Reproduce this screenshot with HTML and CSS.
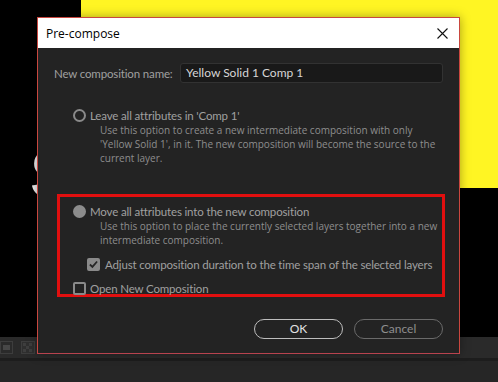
FILE: index.html
```html
<!DOCTYPE html>
<html>
<head>
<meta charset="utf-8">
<link rel="stylesheet" href="styles.css">
</head>
<body>
<div class="app">
  <div class="viewer">
    <div class="solid"></div>
    <span class="glyph">S</span>
  </div>
  <div class="toolbar">
    <svg class="tool" width="13" height="13" viewBox="0 0 13 13"><rect x="0.5" y="0.5" width="12" height="12" fill="none" stroke="#3d3d3d"/><rect x="3" y="4" width="7" height="5" fill="#474747"/></svg>
    <svg class="tool" width="14" height="13" viewBox="0 0 14 13"><rect x="0.5" y="0.5" width="13" height="12" fill="#2f2f2f" stroke="#3d3d3d"/><rect x="2" y="2" width="3" height="3" fill="#3e3e3e"/><rect x="8" y="2" width="3" height="3" fill="#3e3e3e"/><rect x="5" y="5" width="3" height="3" fill="#3e3e3e"/><rect x="2" y="8" width="3" height="3" fill="#3e3e3e"/><rect x="8" y="8" width="3" height="3" fill="#3e3e3e"/></svg>
  </div>
  <div class="divider"></div>
  <div class="panel"></div>
</div>

<div class="dialog">
  <div class="titlebar">
    <span class="title">Pre-compose</span>
    <svg class="close" width="11" height="11" viewBox="0 0 11 11"><path d="M0.5 0.5 L10.5 10.5 M10.5 0.5 L0.5 10.5" stroke="#111" stroke-width="1.1" fill="none"/></svg>
  </div>
  <div class="content">
    <div class="name-row">
      <span class="label">New composition name:</span>
      <div class="input">Yellow Solid 1 Comp 1</div>
    </div>

    <div class="option first">
      <div class="row">
        <span class="radio"></span>
        <span class="label">Leave all attributes in 'Comp 1'</span>
      </div>
      <div class="desc">Use this option to create a new intermediate composition with only<br>'Yellow Solid 1', in it. The new composition will become the source to the<br>current layer.</div>
    </div>

    <div class="highlight">
      <div class="row">
        <span class="radio on"></span>
        <span class="label">Move all attributes into the new composition</span>
      </div>
      <div class="desc">Use this option to place the currently selected layers together into a new<br>intermediate composition.</div>
      <div class="row check-row">
        <span class="check on"><svg width="10" height="9" viewBox="0 0 10 9"><path d="M1 4.5 L3.8 7.2 L9 1.2" stroke="#262626" stroke-width="2" fill="none"/></svg></span>
        <span class="label">Adjust composition duration to the time span of the selected layers</span>
      </div>
      <div class="row open-row">
        <span class="check"></span>
        <span class="label">Open New Composition</span>
      </div>
    </div>

    <div class="buttons">
      <div class="btn ok">OK</div>
      <div class="btn cancel">Cancel</div>
    </div>
  </div>
</div>
</body>
</html>
```

FILE: styles.css
```css
html, body {
  margin: 0;
  padding: 0;
}
body {
  width: 498px;
  height: 382px;
  overflow: hidden;
  background: #000;
  font-family: "Lato", "Open Sans", sans-serif;
  position: relative;
}
.app {
  display: flex;
  flex-direction: column;
  height: 382px;
}
.viewer {
  position: relative;
  height: 337px;
  background: #000;
  overflow: hidden;
}
.solid {
  position: absolute;
  left: 81px;
  top: 0;
  right: 0;
  height: 188px;
  background: #fff523;
}
.glyph {
  position: absolute;
  left: 30px;
  top: 140px;
  font-family: "Liberation Sans", sans-serif;
  font-weight: bold;
  font-size: 68px;
  line-height: 1;
  color: #f2f2f2;
}
.toolbar {
  height: 21px;
  background: #2a2a2a;
  display: flex;
  align-items: center;
  gap: 8px;
}
.tool { display: block; }
.divider {
  height: 3px;
  background: #1d1d1d;
}
.panel {
  flex: 1;
  background: #262626;
}

.dialog {
  position: absolute;
  left: 37px;
  top: 17px;
  width: 421px;
  height: 335px;
  border: 1px solid #c9473f;
  border-bottom-color: #b8434f;
  background: #232323;
  box-shadow: 0 0 10px rgba(0,0,0,0.35);
  display: flex;
  flex-direction: column;
}
.titlebar {
  height: 30px;
  background: #fff;
  display: flex;
  align-items: center;
  justify-content: space-between;
  padding: 0 11px 0 8px;
  flex: none;
}
.title {
  font-family: "Open Sans", sans-serif;
  font-size: 12px;
  color: #000;
}
.close { display: block; }

.content {
  padding: 15px 16px 0 16px;
  display: flex;
  flex-direction: column;
}
.label {
  font-size: 11.5px;
  letter-spacing: -0.15px;
  color: #a0a0a0;
  white-space: nowrap;
}
.name-row {
  display: flex;
  align-items: center;
  height: 20px;
}
.name-row .label {
  width: 126px;
  flex: none;
}
.input {
  flex: 1;
  box-sizing: border-box;
  height: 20px;
  background: #191919;
  border: 1px solid #323232;
  border-radius: 3px;
  font-size: 12px;
  color: #d6d6d6;
  line-height: 18px;
  padding-left: 5px;
}

.option.first {
  margin-top: 24px;
  padding-left: 19px;
}
.row {
  display: flex;
  align-items: center;
  height: 16px;
  gap: 4px;
}
.radio {
  width: 13px;
  height: 13px;
  box-sizing: border-box;
  border: 2px solid #8a8a8a;
  border-radius: 50%;
  flex: none;
}
.radio.on {
  background: #8c8c8c;
  border-color: #8c8c8c;
}
.desc {
  padding-left: 27px;
  font-family: "Open Sans", sans-serif;
  font-size: 10px;
  line-height: 14px;
  color: #8e8e8e;
  white-space: nowrap;
}

.highlight {
  margin-top: 29px;
  margin-left: 3px;
  width: 369px;
  border: 3px solid #e10f0f;
  padding: 6px 0 0 13px;
  height: 91px;
  box-sizing: content-box;
}
.check {
  width: 13px;
  height: 13px;
  box-sizing: border-box;
  border: 2px solid #8a8a8a;
  border-radius: 2px;
  flex: none;
  display: flex;
  align-items: center;
  justify-content: center;
}
.check.on {
  background: #8a8a8a;
}
.check svg { display: block; }
.check-row {
  margin-top: 9px;
  padding-left: 14px;
  gap: 5px;
}
.open-row {
  margin-top: 8px;
}

.buttons {
  display: flex;
  justify-content: flex-end;
  gap: 11px;
  margin-top: 22px;
}
.btn {
  width: 89px;
  height: 20px;
  box-sizing: border-box;
  border-radius: 10px;
  font-size: 12px;
  line-height: 17px;
  text-align: center;
}
.btn.ok {
  border: 1.5px solid #bdbdbd;
  color: #e2e2e2;
}
.btn.cancel {
  border: 1.5px solid #6a6a6a;
  color: #8e8e8e;
}
```
